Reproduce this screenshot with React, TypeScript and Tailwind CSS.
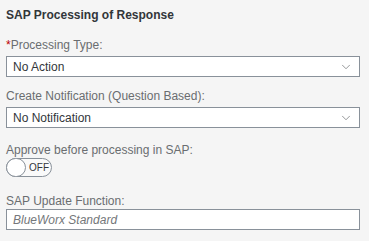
import { ChevronDown } from 'lucide-react';

function Label({ text, required }: { text: string; required?: boolean }) {
  return (
    <div className="h-[14px] text-[12px] leading-[14px] text-[#6a6d70]">
      {required && <span className="text-[#bb0000]">*</span>}
      {text}
    </div>
  );
}

function Select({ value }: { value: string }) {
  return (
    <div className="mt-[4px] flex h-[21px] items-center justify-between border border-[#89919a] bg-white pl-[6px] pr-[6px]">
      <span className="text-[12px] text-[#32363a]">{value}</span>
      <ChevronDown className="h-[14px] w-[14px] text-[#6a6d70]" strokeWidth={1.2} />
    </div>
  );
}

export default function App() {
  return (
    <div
      className="h-[241px] w-[369px] bg-[#f5f5f5] px-[6px] pt-[7px]"
      style={{ fontFamily: '"Liberation Sans", Arial, sans-serif' }}
    >
      <div className="w-[354px]">
        <h2 className="h-[16px] text-[12px] font-bold leading-[16px] text-[#32363a]">SAP Processing of Response</h2>

        <div className="mt-[15px]">
          <Label text="Processing Type:" required />
          <Select value="No Action" />
        </div>

        <div className="mt-[12px]">
          <Label text="Create Notification (Question Based):" />
          <Select value="No Notification" />
        </div>

        <div className="mt-[15px]">
          <Label text="Approve before processing in SAP:" />
          <div className="relative mt-[1px] flex h-[19px] w-[46px] items-center rounded-full border border-[#89919a] bg-[#fafafa]">
            <div className="absolute left-[-1px] top-[-1px] h-[19px] w-[20px] rounded-full border border-[#89919a] bg-white" />
            <span className="ml-[22px] text-[10px] leading-none text-[#32363a]">OFF</span>
          </div>
        </div>

        <div className="mt-[17px]">
          <Label text="SAP Update Function:" />
          <div className="mt-[1px] flex h-[21px] items-center border border-[#89919a] bg-white pl-[6px]">
            <span className="text-[12px] italic text-[#74777a]">BlueWorx Standard</span>
          </div>
        </div>
      </div>
    </div>
  );
}
